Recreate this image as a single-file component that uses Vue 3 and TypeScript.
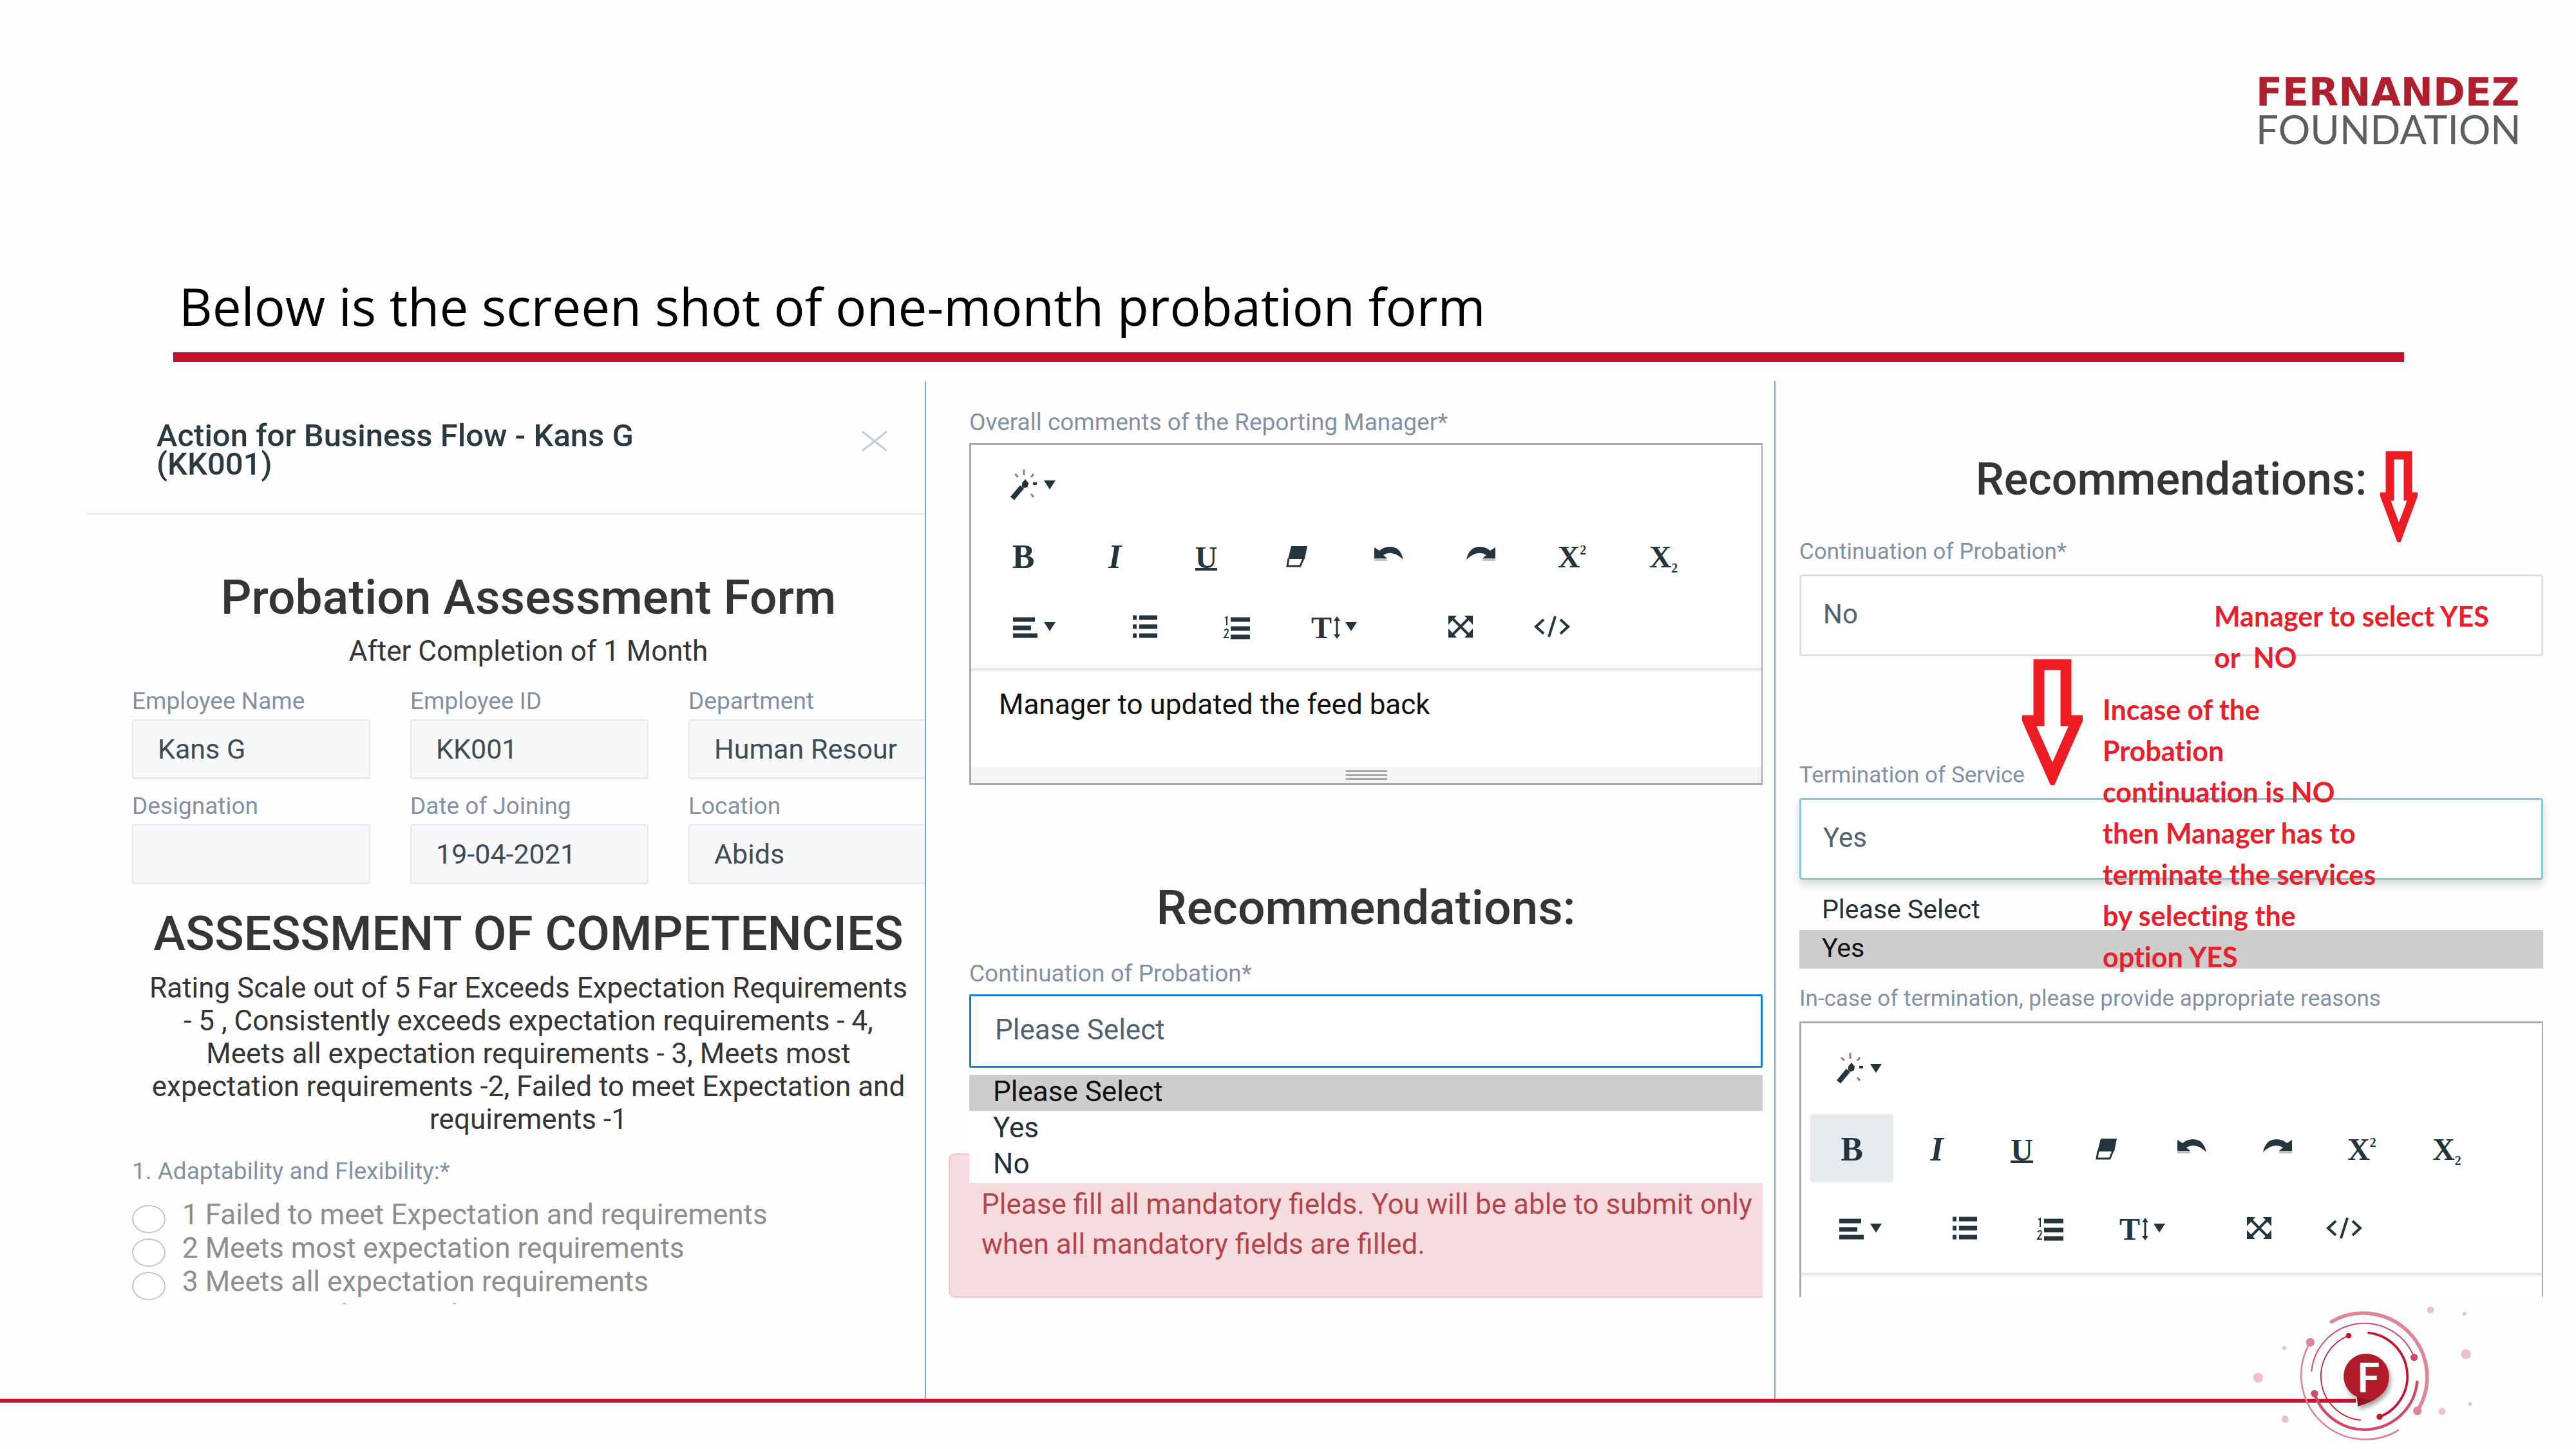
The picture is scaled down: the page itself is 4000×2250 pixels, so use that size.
<script setup lang="ts">
import { ref } from 'vue'

interface Tool {
  icon: string
  label: string
  glyph?: string
  tail?: string
  menu?: boolean
  wide?: boolean
}

const toolRows: Tool[][] = [
  [{ icon: 'wand', label: 'Style', menu: true }],
  [
    { icon: 'bold', label: 'Bold', glyph: 'B' },
    { icon: 'italic', label: 'Italic', glyph: 'I' },
    { icon: 'underline', label: 'Underline', glyph: 'U' },
    { icon: 'eraser', label: 'Remove formatting' },
    { icon: 'undo', label: 'Undo' },
    { icon: 'redo', label: 'Redo' },
    { icon: 'sup', label: 'Superscript', glyph: 'X', tail: '2' },
    { icon: 'sub', label: 'Subscript', glyph: 'X', tail: '2' },
  ],
  [
    { icon: 'align', label: 'Paragraph', menu: true },
    { icon: 'ul', label: 'Bulleted list' },
    { icon: 'ol', label: 'Numbered list' },
    { icon: 'height', label: 'Line height', glyph: 'T', menu: true, wide: true },
    { icon: 'full', label: 'Full screen' },
    { icon: 'code', label: 'Code view' },
  ],
]

const employee = [
  { id: 'name', label: 'Employee Name', value: 'Kans G' },
  { id: 'code', label: 'Employee ID', value: 'KK001' },
  { id: 'dept', label: 'Department', value: 'Human Resour' },
  { id: 'desig', label: 'Designation', value: '' },
  { id: 'doj', label: 'Date of Joining', value: '19-04-2021' },
  { id: 'loc', label: 'Location', value: 'Abids' },
]

const ratings = [
  '1 Failed to meet Expectation and requirements',
  '2 Meets most expectation requirements',
  '3 Meets all expectation requirements',
  '4 Consistently exceeds expectation requirements',
]

const comments = ref('Manager to updated the feed back')
const reasons = ref('')
</script>

<template>
  <div class="slide">
    <svg class="sprite" aria-hidden="true">
      <symbol id="wand" viewBox="0 0 48 48">
        <path d="M4 45L19 27" stroke-width="8" />
        <path class="solid" d="M19 21l5-6 5 6-1 6-5 2-4-2z" />
        <path d="M22 0v9M8 7l5 5M37 7l-4 5M33 38l4 5" stroke-width="3" opacity=".6" />
        <path d="M36 22h6" stroke-width="4" />
      </symbol>
      <symbol id="eraser" viewBox="0 0 48 48">
        <path class="solid" d="M14 9h25l-4 20H9z" />
        <path d="M10 28L8 40h20l5-12" stroke-width="3" />
      </symbol>
      <symbol id="undo" viewBox="0 0 48 48">
        <path class="solid" d="M1 11v17h20l-6-5q14-9 31 7Q42 10 25 10q-9 0-16 6z" />
        <path class="solid" d="M1 28h20v4H1z" opacity=".3" />
      </symbol>
      <symbol id="redo" viewBox="0 0 48 48">
        <path class="solid" d="M47 11v17H27l6-5q-14-9-31 7Q6 10 23 10q9 0 16 6z" />
        <path class="solid" d="M27 28h20v4H27z" opacity=".3" />
      </symbol>
      <symbol id="align" viewBox="0 0 48 48">
        <path d="M5 13h34M5 26h28M5 38h38" stroke-width="7" />
      </symbol>
      <symbol id="ul" viewBox="0 0 48 48">
        <path d="M4 10h6M4 24h6M4 38h6M14 10h28M14 24h28M14 38h28" stroke-width="7" />
      </symbol>
      <symbol id="ol" viewBox="0 0 48 48">
        <path d="M14 13h30M14 27h30M14 40h30" stroke-width="7" />
        <path d="M5 11l3-2v13M4 30q5-4 6 0 0 3-6 11h7" stroke-width="2" />
      </symbol>
      <symbol id="height" viewBox="0 0 16 48">
        <path d="M8 12v27" stroke-width="3" />
        <path class="solid" d="M3 15l5-7 5 7zM3 36l5 7 5-7z" />
      </symbol>
      <symbol id="full" viewBox="0 0 48 48">
        <path d="M10 10l28 28M38 10L10 38" stroke-width="4" />
        <path class="solid" d="M5 7h13L5 21zM43 7H30l13 14zM5 41h13L5 27zM43 41H30l13-14z" />
      </symbol>
      <symbol id="code" viewBox="0 0 58 48">
        <path d="M16 13L4 24l12 11M42 13l12 11-12 11M34 8L24 40" stroke-width="4" />
      </symbol>
    </svg>

    <header class="top">
      <div class="brand">
        <span class="brand-name">FERNANDEZ</span>
        <span class="brand-sub">FOUNDATION</span>
      </div>
      <h1>Below is the screen shot of one-month probation form</h1>
      <hr class="rule">
    </header>

    <main class="columns">
      <section class="col form">
        <div class="modal-head">
          <h2 class="modal-title">Action for Business Flow - Kans G<br>(KK001)</h2>
          <button class="close" type="button" aria-label="Close">
            <svg viewBox="0 0 40 32"><path d="M1 1l38 30M39 1L1 31" /></svg>
          </button>
        </div>
        <div class="form-body">
          <h2 class="heading">Probation Assessment Form</h2>
          <p class="after">After Completion of 1 Month</p>
          <div class="employee">
            <div v-for="f in employee" :key="f.id" class="emp-field">
              <label :for="f.id">{{ f.label }}</label>
              <input :id="f.id" type="text" :value="f.value" readonly>
            </div>
          </div>
          <h2 class="heading competencies">ASSESSMENT OF COMPETENCIES</h2>
          <p class="scale">
            Rating Scale out of 5 Far Exceeds Expectation Requirements<br>
            - 5 , Consistently exceeds expectation requirements - 4,<br>
            Meets all expectation requirements - 3, Meets most<br>
            expectation requirements -2, Failed to meet Expectation and<br>
            requirements -1
          </p>
          <fieldset class="ratings">
            <legend>1. Adaptability and Flexibility:*</legend>
            <div class="rating-list">
              <label v-for="r in ratings" :key="r" class="rating">
                <input type="radio" name="adaptability">
                <span>{{ r }}</span>
              </label>
            </div>
          </fieldset>
        </div>
      </section>

      <section class="col feedback">
        <label for="comments">Overall comments of the Reporting Manager*</label>
        <div class="editor">
          <div class="toolbar">
            <div v-for="(row, i) in toolRows" :key="i" class="tool-row">
              <button
                v-for="t in row"
                :key="t.icon"
                type="button"
                class="tool"
                :class="[t.icon, { menu: t.menu, wide: t.wide }]"
                :aria-label="t.label"
              >
                <span v-if="t.glyph" class="glyph">{{ t.glyph }}</span>
                <span v-if="t.tail" class="tail">{{ t.tail }}</span>
                <svg v-if="!t.glyph || t.menu" class="icon"><use :href="'#' + t.icon" /></svg>
                <span v-if="t.menu" class="caret" />
              </button>
            </div>
          </div>
          <textarea id="comments" v-model="comments" class="editor-text" />
          <div class="grip"><i /><i /><i /></div>
        </div>

        <h2 class="heading">Recommendations:</h2>
        <label for="continuation-a">Continuation of Probation*</label>
        <div class="picker">
          <select id="continuation-a" class="focused">
            <option>Please Select</option>
            <option>Yes</option>
            <option>No</option>
          </select>
          <ul class="options">
            <li class="active">Please Select</li>
            <li>Yes</li>
            <li>No</li>
          </ul>
        </div>
        <p class="alert">
          Please fill all mandatory fields. You will be able to submit only<br>
          when all mandatory fields are filled.
        </p>
      </section>

      <section class="col outcome">
        <h2 class="heading">Recommendations:</h2>
        <label for="continuation-b">Continuation of Probation*</label>
        <div class="picker">
          <select id="continuation-b">
            <option>No</option>
            <option>Yes</option>
          </select>
        </div>
        <label for="termination">Termination of Service</label>
        <div class="picker">
          <select id="termination" class="open">
            <option>Yes</option>
            <option>Please Select</option>
          </select>
          <ul class="options">
            <li>Please Select</li>
            <li class="active">Yes</li>
          </ul>
        </div>
        <label for="reasons">In-case of termination, please provide appropriate reasons</label>
        <div class="editor">
          <div class="toolbar">
            <div v-for="(row, i) in toolRows" :key="i" class="tool-row">
              <button
                v-for="t in row"
                :key="t.icon"
                type="button"
                class="tool"
                :class="[t.icon, { menu: t.menu, wide: t.wide, on: t.icon === 'bold' }]"
                :aria-label="t.label"
              >
                <span v-if="t.glyph" class="glyph">{{ t.glyph }}</span>
                <span v-if="t.tail" class="tail">{{ t.tail }}</span>
                <svg v-if="!t.glyph || t.menu" class="icon"><use :href="'#' + t.icon" /></svg>
                <span v-if="t.menu" class="caret" />
              </button>
            </div>
          </div>
          <textarea id="reasons" v-model="reasons" class="editor-text" />
        </div>

        <svg class="arrow arrow-select" viewBox="0 0 58 142">
          <path d="M15 7h28v64h8L29 130 7 71h8z" stroke-width="13" />
        </svg>
        <svg class="arrow arrow-terminate" viewBox="0 0 94 196">
          <path d="M26 9h42v87h17L47 182 9 96h17z" stroke-width="17" />
        </svg>
        <p class="note note-select">Manager to select YES<br>or&nbsp; NO</p>
        <p class="note note-terminate">
          Incase of the<br>Probation<br>continuation is NO<br>then Manager has to<br>terminate the services<br>by selecting the<br>option YES
        </p>
      </section>
    </main>

    <footer class="foot">
      <svg class="badge" viewBox="0 0 1260 750" aria-hidden="true">
        <defs>
          <filter id="soft" x="-30%" y="-30%" width="160%" height="160%">
            <feDropShadow dx="8" dy="16" stdDeviation="9" flood-opacity=".35" />
          </filter>
        </defs>
        <g fill="#efbfcb">
          <circle cx="942" cy="102" r="16" /><circle cx="1100" cy="120" r="9" />
          <circle cx="1107" cy="308" r="23" /><circle cx="139" cy="418" r="23" />
          <circle cx="261" cy="280" r="9" /><circle cx="265" cy="611" r="17" />
          <circle cx="996" cy="575" r="16" /><circle cx="1126" cy="541" r="9" />
        </g>
        <g fill="none" stroke-linecap="round">
          <g stroke="#dd8796">
            <path d="M481 157A297 297 0 0 1 881 572" stroke-width="17" />
            <path d="M382 253A299 299 0 0 0 792 663" stroke-width="8" />
          </g>
          <g stroke="#cf4a64">
            <path d="M388 387A248 248 0 0 1 866 323" stroke-width="6" />
            <path d="M402 492A246 246 0 0 0 880 437" stroke-width="13" />
          </g>
          <g stroke="#c4122f">
            <path d="M561 222A204 204 0 0 0 617 615" stroke-width="5" />
            <path d="M654 209A203 203 0 0 1 705 600" stroke-width="11" />
          </g>
        </g>
        <circle cx="382" cy="253" r="20" fill="#dd8796" />
        <circle cx="881" cy="572" r="20" fill="#dd8796" />
        <circle cx="866" cy="323" r="17" fill="#cf4a64" />
        <circle cx="402" cy="492" r="17" fill="#cf4a64" />
        <circle cx="561" cy="222" r="13" fill="#c4122f" />
        <circle cx="705" cy="600" r="14" fill="#c4122f" />
        <path d="M594 505v50l60-22z" fill="#fff" />
        <path
          d="M644 306A105 105 0 0 1 749 411C749 500 676 528 604 551L600 507A105 105 0 0 1 644 306z"
          fill="#b01a2b"
          filter="url(#soft)"
        />
        <path d="M600 507q40 22 90 10-40 20-86 34z" fill="#8f1322" />
        <text x="653" y="486" class="badge-letter">F</text>
      </svg>
    </footer>
  </div>
</template>

<style>
body {
  margin: 0;
  background: #fff;
}
</style>

<style scoped>
.slide {
  min-height: 100vh;
  overflow: hidden;
  background: #fefefe;
  font-family: Roboto, "Liberation Sans", sans-serif;
  color: #343536;
}
.slide *,
.slide *::before {
  box-sizing: border-box;
}
h1,
h2,
p,
ul {
  margin: 0;
  padding: 0;
  font-weight: 400;
}
button,
input,
select,
textarea {
  margin: 0;
  font: inherit;
  color: inherit;
}
.sprite {
  position: absolute;
  width: 0;
  height: 0;
}
.sprite path {
  fill: none;
  stroke: #253540;
}
.sprite .solid {
  fill: #253540;
  stroke: none;
}

.top {
  padding: 114px 84px 30px 269px;
}
.brand {
  display: flex;
  flex-direction: column;
  width: 413px;
  margin-left: auto;
}
.brand-name {
  font: 700 60px/58px "DejaVu Sans", sans-serif;
  color: #b01f2e;
}
.brand-sub {
  font: 400 62px/56px Lato, sans-serif;
  color: #5a5f61;
}
h1 {
  margin: 197px 0 22px 9px;
  font: 400 80px/100px "Open Sans", sans-serif;
  color: #000;
  white-space: nowrap;
}
.rule {
  height: 15px;
  margin: 0 183px 0 0;
  border: 0;
  background: #c4122f;
}

.columns {
  display: grid;
  grid-template-columns: 1438fr 1319fr 1243fr;
}
.col {
  min-width: 0;
  border-right: 2px solid #78a9d2;
}
.col:last-child {
  border-right: 0;
}
.heading {
  font-size: 75px;
  line-height: 88px;
  font-weight: 500;
  text-align: center;
  white-space: nowrap;
}
label,
legend {
  display: block;
  padding: 0;
  font-size: 37px;
  line-height: 44px;
  color: #8291a3;
  white-space: nowrap;
}

.form {
  padding-bottom: 147px;
  overflow: hidden;
}
.modal-head {
  display: flex;
  justify-content: space-between;
  align-items: flex-start;
  margin-left: 135px;
  padding: 63px 58px 54px 108px;
  border-bottom: 2px solid #e3e6e8;
}
.modal-title {
  font-size: 49px;
  line-height: 44px;
  font-weight: 500;
  color: #2b3a42;
}
.close {
  padding: 14px 0 0;
  border: 0;
  background: none;
}
.close svg {
  display: block;
  width: 40px;
  height: 32px;
  fill: none;
  stroke: #c3cdd8;
  stroke-width: 3;
}
.form-body {
  padding: 84px 0 0 205px;
}
.after {
  margin: 14px 0 30px;
  font-size: 44px;
  line-height: 52px;
  text-align: center;
}
.employee {
  display: grid;
  grid-template-columns: repeat(3, 370px);
  gap: 20px 62px;
}
.emp-field input {
  display: block;
  width: 100%;
  height: 93px;
  margin-top: 6px;
  padding: 0 38px;
  border: 2px solid #e6eaee;
  border-bottom-width: 3px;
  border-radius: 4px;
  background: #f6f8fa;
  font-size: 43px;
  color: #3f4b55;
}
.competencies {
  margin-top: 32px;
}
.scale {
  margin: 16px 0 33px;
  font-size: 44px;
  line-height: 51px;
  text-align: center;
  white-space: nowrap;
}
.ratings {
  min-width: 0;
  margin: 0;
  padding: 0;
  border: 0;
}
.rating-list {
  height: 184px;
  overflow: hidden;
  padding-top: 19px;
}
.rating {
  display: flex;
  align-items: center;
  gap: 26px;
  font-size: 44px;
  line-height: 52px;
  color: #8c8e90;
}
.rating input {
  appearance: none;
  width: 52px;
  height: 44px;
  margin: 11px 0 -3px;
  border: 2px solid #c4c4c4;
  border-radius: 50%;
  background: #fff;
}

.feedback {
  --btn: 138px;
  --btn-gap: 4px;
  --btn-menu: 186px;
  --btn-wide: 201px;
  --row: 110px;
  padding: 42px 18px 0 67px;
}
.editor {
  margin-top: 10px;
  border: 3px solid #ababab;
  border-right-width: 2px;
  background: #fff;
}
.toolbar {
  padding: 7px 0 9px 12px;
  border-bottom: 4px solid #e8e8e8;
}
.tool-row {
  display: flex;
  align-items: center;
  gap: var(--btn-gap);
  height: var(--row);
}
.tool {
  display: flex;
  align-items: center;
  justify-content: center;
  flex: none;
  width: var(--btn);
  height: 106px;
  padding: 0;
  border: 0;
  border-radius: 4px;
  background: none;
}
.tool.menu {
  justify-content: flex-start;
  width: var(--btn-menu);
  padding-left: 48px;
}
.tool.wide {
  width: var(--btn-wide);
  padding-left: 42px;
}
.tool.on {
  background: #e6ebf0;
}
.glyph,
.tail {
  font-family: "Liberation Serif", serif;
  font-weight: 700;
  color: #253540;
}
.glyph {
  padding-top: 3px;
  font-size: 52px;
  line-height: 56px;
}
.italic .glyph {
  font-style: italic;
}
.underline .glyph {
  height: 45px;
  border-bottom: 4px solid #253540;
  font-size: 48px;
  line-height: 44px;
}
.sup .glyph,
.sub .glyph,
.height .glyph {
  font-size: 48px;
}
.tail {
  font-size: 20px;
  line-height: 20px;
}
.sup .tail {
  align-self: flex-start;
  margin-top: 34px;
}
.sub .tail {
  align-self: flex-end;
  margin-bottom: 24px;
}
.icon {
  width: 48px;
  height: 48px;
}
.code .icon {
  width: 58px;
}
.height .icon {
  width: 16px;
}
.caret {
  margin-left: 5px;
  border: 9px solid transparent;
  border-top: 14px solid #253540;
  border-bottom: 0;
}
.editor-text {
  display: block;
  width: 100%;
  height: 150px;
  padding: 25px 43px;
  border: 0;
  border-top: 2px solid #f5f5f5;
  resize: none;
  background: none;
  font-size: 44px;
  line-height: 52px;
  color: #111;
}
.grip {
  display: flex;
  flex-direction: column;
  align-items: center;
  justify-content: center;
  gap: 3px;
  height: 25px;
  background: #f4f4f4;
}
.grip i {
  width: 64px;
  height: 3px;
  background: #a9a9a9;
}
.feedback .heading {
  margin: 146px 0 37px;
}

.picker {
  position: relative;
  margin-top: 10px;
}
select {
  appearance: none;
  display: block;
  width: 100%;
  height: 114px;
  padding: 0 37px 4px;
  border: 3px solid #dae1e6;
  border-radius: 4px;
  background: #fff;
  font-size: 44px;
  color: #50616f;
}
select.focused {
  border-color: #1a78cf;
  border-radius: 2px;
}
.options {
  position: absolute;
  z-index: 1;
  top: calc(100% + 11px);
  left: 0;
  right: 0;
  list-style: none;
  background: #fff;
  font-size: 44px;
  line-height: 52px;
  color: #222f38;
}
.options li {
  padding: 0 0 4px 37px;
}
.options .active {
  background: #cdcdcd;
  color: #111;
}
.alert {
  margin: 133px 0 0 -32px;
  padding: 46px 0 50px 49px;
  border: 2px solid #f1c5ca;
  border-right: 0;
  border-radius: 10px 0 0 10px;
  background: #f7dcdf;
  font-size: 44px;
  line-height: 62px;
  color: #b4444b;
  white-space: nowrap;
}

.outcome {
  --btn: 129px;
  --btn-gap: 3px;
  --btn-menu: 173px;
  --btn-wide: 189px;
  --row: 124px;
  position: relative;
  padding: 108px 51px 0 37px;
}
.outcome .heading {
  margin-bottom: 47px;
  font-size: 70px;
}
.outcome label {
  font-size: 35px;
}
.outcome .picker {
  margin: 13px 0 163px;
}
.outcome select {
  height: 127px;
  padding: 0 34px 4px;
  font-size: 42px;
}
.outcome select.open {
  border-color: #87c8cf;
  box-shadow: 0 8px 14px rgba(0, 0, 0, 0.15);
}
.outcome .options {
  top: calc(100% + 18px);
  background: none;
  font-size: 41px;
  line-height: 56px;
}
.outcome .options li {
  padding-left: 35px;
}
.outcome .editor {
  margin-top: 13px;
  border-bottom: 0;
}
.outcome .toolbar {
  padding: 8px 0 7px 14px;
}
.outcome .tool.menu {
  padding-left: 40px;
}
.outcome .editor-text {
  height: 34px;
  padding: 0 43px;
}
.arrow {
  position: absolute;
  z-index: 2;
  fill: none;
  stroke: #ed1c24;
}
.arrow-select {
  top: 108px;
  right: 246px;
  width: 58px;
}
.arrow-terminate {
  top: 431px;
  right: 766px;
  width: 94px;
}
.note {
  position: absolute;
  z-index: 2;
  font: 700 43px/64px Lato, sans-serif;
  font-variant-ligatures: none;
  color: #e8202c;
  white-space: nowrap;
}
.note-select {
  top: 333px;
  left: 681px;
}
.note-terminate {
  top: 478px;
  left: 508px;
}

.foot {
  position: relative;
  height: 78px;
}
.foot::before {
  content: "";
  display: block;
  width: calc(100% - 342px);
  height: 6px;
  background: #c4122f;
}
.badge {
  position: absolute;
  right: 120px;
  bottom: 0;
  width: 420px;
  height: 250px;
}
.badge-letter {
  font: 700 190px Lato, sans-serif;
  fill: #fff;
  text-anchor: middle;
}
</style>
